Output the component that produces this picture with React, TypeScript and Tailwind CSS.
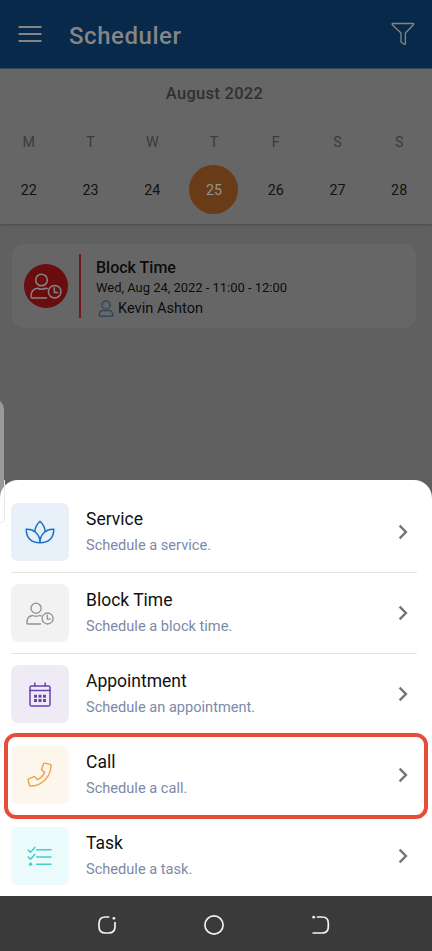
import type { ReactNode } from "react";
import clsx from "clsx";

interface MenuItem {
  title: string;
  text: string;
  tile: string;
  icon: ReactNode;
  divider: boolean;
}

const days = [
  { label: "M", date: 22 },
  { label: "T", date: 23 },
  { label: "W", date: 24 },
  { label: "T", date: 25, active: true },
  { label: "F", date: 26 },
  { label: "S", date: 27 },
  { label: "S", date: 28 },
];

function UserClockIcon({ className }: { className?: string }) {
  return (
    <svg viewBox="0 0 32 26" fill="none" stroke="currentColor" strokeWidth="1.5" strokeLinecap="round" strokeLinejoin="round" className={className}>
      <circle cx="11.5" cy="7" r="5.8" />
      <path d="M16.5 25H2.2Q1 25 1 23.8C1 18.3 3.3 15.8 7.3 15.3Q11.5 17 15.7 15.3L17.3 15.6" />
      <circle cx="24.7" cy="18.7" r="6.3" />
      <path d="M24.3 14.8V19.4H27.8" />
    </svg>
  );
}

function UserIcon() {
  return (
    <svg viewBox="0 0 16 17" fill="none" stroke="#25435f" strokeWidth="1.2" strokeLinejoin="round" className="h-[17px] w-4">
      <circle cx="8" cy="5" r="4.1" />
      <path d="M5 10.3Q8 11.4 11 10.3C13.7 10.6 14.8 12.6 14.8 15.4Q14.8 16.1 14 16.1H2Q1.2 16.1 1.2 15.4C1.2 12.6 2.3 10.6 5 10.3Z" />
    </svg>
  );
}

function LotusIcon() {
  return (
    <svg viewBox="0 0 30 24" fill="none" stroke="#1b70c4" strokeWidth="1.5" strokeLinejoin="round" className="h-6 w-[30px]">
      <path d="M9.6 11.7C10.3 7 12.6 3.4 15 1.2C17.4 3.4 19.7 7 20.4 11.7" />
      <path d="M15 22.7C6.4 22.7 1.4 18.3 1.2 9.3C8.5 8.7 15 14 15 22.7ZM15 22.7C23.6 22.7 28.6 18.3 28.8 9.3C21.5 8.7 15 14 15 22.7Z" />
    </svg>
  );
}

function CalendarIcon() {
  return (
    <svg viewBox="0 0 22 25" fill="none" stroke="#6743ac" strokeWidth="1.5" strokeLinecap="round" className="h-[25px] w-[22px]">
      <rect x="1" y="4" width="20" height="20" rx="1.6" />
      <path d="M1 8.5H21M5.8 1V4M16.2 1V4" />
      <path d="M5 12.7H8V15.7H5ZM9.5 12.7H12.5V15.7H9.5ZM14 12.7H17V15.7H14ZM5 17H8V20H5ZM9.5 17H12.5V20H9.5ZM14 17H17V20H14Z" fill="#6743ac" stroke="none" />
    </svg>
  );
}

function PhoneIcon() {
  return (
    <svg viewBox="0 0 26 26" fill="none" stroke="#eba64a" strokeWidth="1.5" strokeLinejoin="round" className="mr-px mb-px h-[25px] w-[25px]">
      <path d="M18.3 1.2L24.2 2.5Q25 2.7 25 3.5C25 15.3 15.3 25 3.5 25Q2.7 25 2.5 24.2L1.2 18.7Q1 17.9 1.8 17.5L7.2 15.2Q7.9 14.9 8.4 15.5L10.8 18.4C14.2 16.8 16.8 14.2 18.4 10.8L15.5 8.4Q14.9 7.9 15.2 7.2L17.3 1.8Q17.6 1.1 18.3 1.2Z" />
    </svg>
  );
}

function TaskIcon() {
  return (
    <svg viewBox="0 0 26 22" fill="none" stroke="#40d0cb" strokeWidth="1.6" strokeLinecap="round" strokeLinejoin="round" className="mr-px h-[21px] w-[25px]">
      <path d="M1.2 4.3L3.6 6.5L8.1 1.5M1.2 11.6L3.6 13.8L8.1 8.8M10 4H25M10 11.5H25M10 19.2H25" />
      <circle cx="3.7" cy="19" r="1.8" fill="#40d0cb" stroke="none" />
    </svg>
  );
}

const items: MenuItem[] = [
  { title: "Service", text: "Schedule a service.", tile: "bg-[#e7eff8]", icon: <LotusIcon />, divider: true },
  { title: "Block Time", text: "Schedule a block time.", tile: "bg-[#f2f2f2]", icon: <UserClockIcon className="h-[23px] w-7 text-[#929294]" />, divider: true },
  { title: "Appointment", text: "Schedule an appointment.", tile: "bg-[#eeebf6]", icon: <CalendarIcon />, divider: false },
  { title: "Call", text: "Schedule a call.", tile: "bg-[#fdf6ed]", icon: <PhoneIcon />, divider: false },
  { title: "Task", text: "Schedule a task.", tile: "bg-[#ebfafa]", icon: <TaskIcon />, divider: false },
];

function Header() {
  return (
    <header className="flex h-[69px] items-center border-b border-[#34485c] bg-[#082949] pr-[17px] pl-[18px] text-[#858585]">
      <svg viewBox="0 0 24 18" stroke="currentColor" strokeWidth="2" className="h-[18px] w-6">
        <path d="M0.5 2H23.5M0.5 9H23.5M0.5 16H23.5" />
      </svg>
      <h1 className="ml-[27px] flex-1 pt-[3px] text-[24px] leading-8 font-medium tracking-[0.55px]">Scheduler</h1>
      <svg viewBox="0 0 24 24" fill="none" stroke="currentColor" strokeWidth="1.3" strokeLinejoin="round" className="h-6 w-6">
        <path d="M1.2 1.5H22.5V2.7L14.4 11V22L13 22.3L10 20V11L1.2 2.7Z" />
      </svg>
    </header>
  );
}

function WeekCalendar() {
  return (
    <section className="h-[155px] bg-[#666] pt-[13px] shadow-[0_1px_2px_rgba(0,0,0,0.25)]">
      <h2 className="-ml-[3px] text-center text-[16.5px] leading-6 font-medium tracking-[0.3px] text-[#303030]">August 2022</h2>
      <div className="-ml-[2px] grid w-[432px] grid-cols-7 pt-6 text-center text-[14.3px]">
        {days.map((day, i) => (
          <div key={i} className="flex flex-col items-center">
            <span className="h-6 leading-6 text-[#3b3b3b]">{day.label}</span>
            <span className={clsx("mt-[11px] flex size-[49px] items-center justify-center rounded-full pt-[2px]", day.active ? "bg-[#693b16] text-[#949494]" : "text-[#111]")}>
              {day.date}
            </span>
          </div>
        ))}
      </div>
    </section>
  );
}

function EventCard() {
  return (
    <article className="mt-5 mr-4 ml-3 flex h-21 items-center rounded-[12px] bg-[#666] pl-[12px] text-black/90">
      <div className="flex size-11 items-center justify-center rounded-full bg-[#6a0d0f] text-[#858585]">
        <UserClockIcon className="mr-px h-[26px] w-8" />
      </div>
      <div className="ml-[11px] h-16 w-[2px] bg-[#74191b]" />
      <div className="ml-[15px] flex flex-col pt-1">
        <h3 className="h-5 text-[16px] leading-5 font-medium">Block Time</h3>
        <p className="h-5 text-[12.95px] leading-5">Wed, Aug 24, 2022 - 11:00 - 12:00</p>
        <p className="flex h-5 items-center gap-1 pl-[2px] text-[14.6px] leading-5">
          <UserIcon />
          Kevin Ashton
        </p>
      </div>
    </article>
  );
}

function MenuRow({ item }: { item: MenuItem }) {
  return (
    <li className={clsx("flex h-[81px] items-center border-b", item.divider ? "border-[#e3e3e3]" : "border-transparent")}>
      <div className={clsx("flex size-[58px] shrink-0 items-center justify-center rounded-[7px]", item.tile)}>{item.icon}</div>
      <div className="ml-[17px] flex-1">
        <h4 className="h-[26px] text-[17.5px] leading-[27px] text-[#111]">{item.title}</h4>
        <p className="text-[14.6px] leading-[26px] text-[#7d89a8]">{item.text}</p>
      </div>
      <svg viewBox="0 0 10 16" fill="none" stroke="#747474" strokeWidth="2.4" className="mr-[9px] h-4 w-[10px]">
        <path d="M1.6 1.7L7.9 8L1.6 14.3" />
      </svg>
    </li>
  );
}

function NavBar() {
  return (
    <nav className="flex h-[55px] items-center bg-[#3a3a3a] pt-[3px] pl-[97px] text-[#f2f2f2]">
      <svg viewBox="0 0 20 20" fill="none" stroke="currentColor" strokeWidth="1.7" className="size-5">
        <path d="M12.3 2H8.5Q2 2 2 8.5V11.5Q2 18 8.5 18H11.5Q18 18 18 11.5V7" />
        <circle cx="16.9" cy="3.3" r="1.4" fill="currentColor" stroke="none" />
      </svg>
      <svg viewBox="0 0 22 22" fill="none" stroke="currentColor" strokeWidth="1.7" className="ml-[86px] size-[22px]">
        <circle cx="11" cy="11" r="9.1" />
      </svg>
      <svg viewBox="0 0 20 20" fill="none" stroke="currentColor" strokeWidth="1.7" className="ml-[86px] size-5">
        <path d="M5.8 2H11Q17.3 2 17.3 8V12Q17.3 18 11 18H1.5" />
        <circle cx="2.7" cy="2.2" r="1.4" fill="currentColor" stroke="none" />
      </svg>
    </nav>
  );
}

export default function App() {
  return (
    <div className="relative flex h-[951px] w-[432px] flex-col overflow-hidden bg-[#606060] font-[Roboto,sans-serif]">
      <Header />
      <WeekCalendar />
      <EventCard />
      {/* edge panel handle */}
      <div className="absolute top-[399px] -left-4 h-[124px] w-5 rounded-[12px] bg-[#999]" />
      <div className="relative mt-auto h-[416px] rounded-t-[18px] bg-white pt-3 pr-[15px] pl-[11px]">
        <div className="absolute top-0 left-0 h-[43px] w-[5px] rounded-br-[8px] border-r border-b border-[#e8e8e8]" />
        <ul>
          {items.map((item) => (
            <MenuRow key={item.title} item={item} />
          ))}
        </ul>
        {/* highlight around the Call row */}
        <div className="pointer-events-none absolute top-[253px] left-1 h-[86px] w-[424px] rounded-[12px] border-4 border-[#e54e39]" />
      </div>
      <NavBar />
    </div>
  );
}
